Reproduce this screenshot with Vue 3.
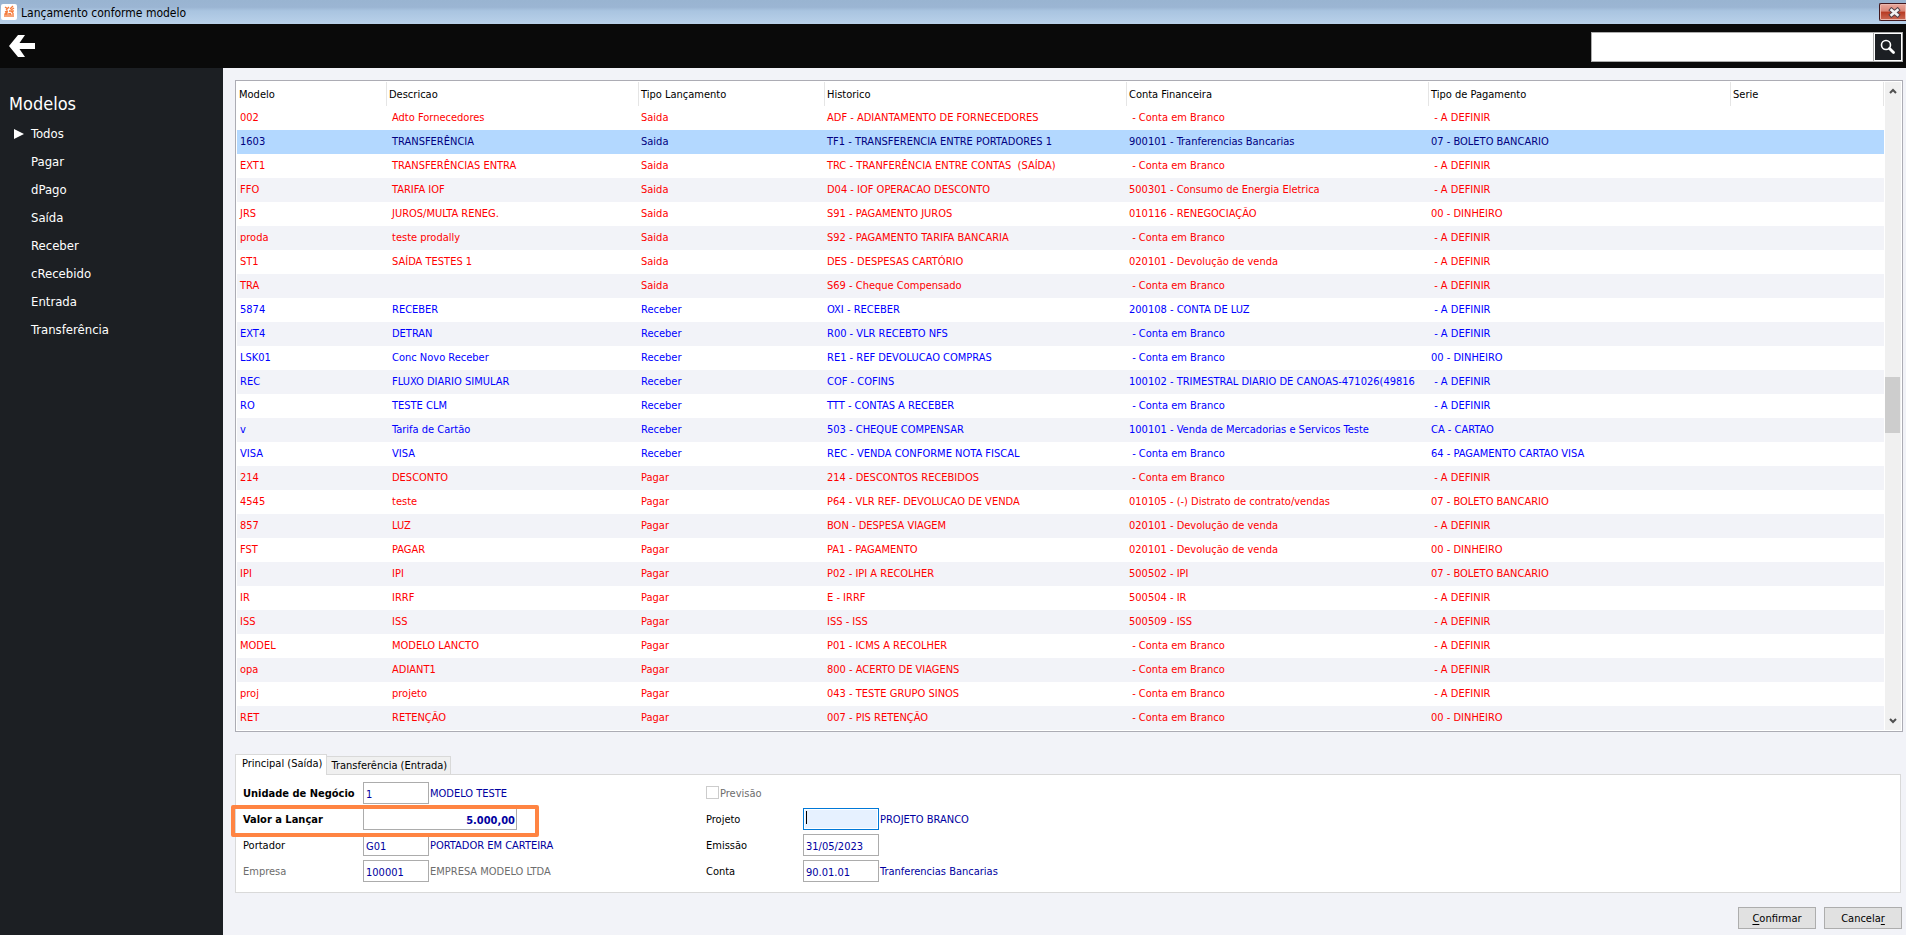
<script setup>
import { ref } from 'vue'

const menu = ['Todos', 'Pagar', 'dPago', 'Saída', 'Receber', 'cRecebido', 'Entrada', 'Transferência']
const active = ref('Todos')
const selected = ref('1603')
const search = ref('')

const columns = [
  { label: 'Modelo', cls: 'c-modelo' },
  { label: 'Descricao', cls: 'c-desc' },
  { label: 'Tipo Lançamento', cls: 'c-tipo' },
  { label: 'Historico', cls: 'c-wide' },
  { label: 'Conta Financeira', cls: 'c-wide' },
  { label: 'Tipo de Pagamento', cls: 'c-wide' },
  { label: 'Serie', cls: 'c-serie' }
]

const branco = ' - Conta em Branco'
const definir = ' - A DEFINIR'
const dinheiro = '00 - DINHEIRO'
const boleto = '07 - BOLETO BANCARIO'

const rows = [
  ['002', 'Adto Fornecedores', 'Saida', 'ADF - ADIANTAMENTO DE FORNECEDORES', branco, definir],
  ['1603', 'TRANSFERÊNCIA', 'Saida', 'TF1 - TRANSFERENCIA ENTRE PORTADORES 1', '900101 - Tranferencias Bancarias', boleto],
  ['EXT1', 'TRANSFERÊNCIAS ENTRA', 'Saida', 'TRC - TRANFERÊNCIA ENTRE CONTAS  (SAÍDA)', branco, definir],
  ['FFO', 'TARIFA IOF', 'Saida', 'D04 - IOF OPERACAO DESCONTO', '500301 - Consumo de Energia Eletrica', definir],
  ['JRS', 'JUROS/MULTA RENEG.', 'Saida', 'S91 - PAGAMENTO JUROS', '010116 - RENEGOCIAÇÃO', dinheiro],
  ['proda', 'teste prodally', 'Saida', 'S92 - PAGAMENTO TARIFA BANCARIA', branco, definir],
  ['ST1', 'SAÍDA TESTES 1', 'Saida', 'DES - DESPESAS CARTÓRIO', '020101 - Devolução de venda', definir],
  ['TRA', '', 'Saida', 'S69 - Cheque Compensado', branco, definir],
  ['5874', 'RECEBER', 'Receber', 'OXI - RECEBER', '200108 - CONTA DE LUZ', definir],
  ['EXT4', 'DETRAN', 'Receber', 'R00 - VLR RECEBTO NFS', branco, definir],
  ['LSK01', 'Conc Novo Receber', 'Receber', 'RE1 - REF DEVOLUCAO COMPRAS', branco, dinheiro],
  ['REC', 'FLUXO DIARIO SIMULAR', 'Receber', 'COF - COFINS', '100102 - TRIMESTRAL DIARIO DE CANOAS-471026(49816', definir],
  ['RO', 'TESTE CLM', 'Receber', 'TTT - CONTAS A RECEBER', branco, definir],
  ['v', 'Tarifa de Cartão', 'Receber', '503 - CHEQUE COMPENSAR', '100101 - Venda de Mercadorias e Servicos Teste', 'CA - CARTAO'],
  ['VISA', 'VISA', 'Receber', 'REC - VENDA CONFORME NOTA FISCAL', branco, '64 - PAGAMENTO CARTAO VISA'],
  ['214', 'DESCONTO', 'Pagar', '214 - DESCONTOS RECEBIDOS', branco, definir],
  ['4545', 'teste', 'Pagar', 'P64 - VLR REF- DEVOLUCAO DE VENDA', '010105 - (-) Distrato de contrato/vendas', boleto],
  ['857', 'LUZ', 'Pagar', 'BON - DESPESA VIAGEM', '020101 - Devolução de venda', definir],
  ['FST', 'PAGAR', 'Pagar', 'PA1 - PAGAMENTO', '020101 - Devolução de venda', dinheiro],
  ['IPI', 'IPI', 'Pagar', 'P02 - IPI A RECOLHER', '500502 - IPI', boleto],
  ['IR', 'IRRF', 'Pagar', 'E - IRRF', '500504 - IR', definir],
  ['ISS', 'ISS', 'Pagar', 'ISS - ISS', '500509 - ISS', definir],
  ['MODEL', 'MODELO LANCTO', 'Pagar', 'P01 - ICMS A RECOLHER', branco, definir],
  ['opa', 'ADIANT1', 'Pagar', '800 - ACERTO DE VIAGENS', branco, definir],
  ['proj', 'projeto', 'Pagar', '043 - TESTE GRUPO SINOS', branco, definir],
  ['RET', 'RETENÇÃO', 'Pagar', '007 - PIS RETENÇÃO', branco, dinheiro]
]

const unidade = ref('1')
const valor = ref('5.000,00')
const portador = ref('G01')
const empresa = ref('100001')
const projeto = ref('')
const emissao = ref('31/05/2023')
const conta = ref('90.01.01')
</script>

<template>
  <div class="window">
    <header class="titlebar">
      <svg class="app-icon" width="16" height="16" viewBox="0 0 16 16" aria-hidden="true">
        <rect width="16" height="16" rx="2" fill="#fff" />
        <g stroke="#f47b3c" stroke-width="1.4" fill="none">
          <path d="M4 3l3 2M8 3L5 6M9 5l3-3M10 6l3-2M4 8l3-1M8 7h2l2 2M4 13v-3l2-1v4M8 13V9M10 13v-2l-1-2M12 13V9M12 6v2" />
        </g>
      </svg>
      <h1>Lançamento conforme modelo</h1>
      <button class="close" type="button" aria-label="Fechar">
        <svg width="13" height="11" viewBox="0 0 13 11" aria-hidden="true">
          <path d="M3.500 3L9.500 8M9.500 3L3.500 8" stroke="#54434a" stroke-width="4.500" stroke-linecap="square" />
          <path d="M3.500 3L9.500 8M9.500 3L3.500 8" stroke="#f4f4f4" stroke-width="2.500" stroke-linecap="square" />
        </svg>
      </button>
    </header>

    <div class="toolbar">
      <button class="back" type="button" aria-label="Voltar">
        <svg width="26" height="22" viewBox="0 0 26 22" aria-hidden="true">
          <path d="M0 11L9 0h7L10.500 8H26v6H10.500L16 22H9z" fill="#fff" />
        </svg>
      </button>
      <form class="search" @submit.prevent>
        <input v-model="search" type="text" aria-label="Pesquisar" />
        <button type="submit" aria-label="Buscar">
          <svg width="16" height="16" viewBox="0 0 16 16" aria-hidden="true">
            <circle cx="6" cy="6" r="4.500" fill="none" stroke="#fff" stroke-width="1.600" />
            <path d="M9.500 9.500L13.500 13.500" stroke="#fff" stroke-width="2.800" stroke-linecap="round" />
          </svg>
        </button>
      </form>
    </div>

    <div class="body">
      <nav class="sidebar">
        <h2>Modelos</h2>
        <ul>
          <li v-for="item in menu" :key="item">
            <span class="marker">
              <svg v-if="item === active" width="10" height="10" viewBox="0 0 10 10" aria-hidden="true">
                <path d="M0 0L10 5 0 10z" fill="#fff" />
              </svg>
            </span>
            <a href="#" @click.prevent="active = item">{{ item }}</a>
          </li>
        </ul>
      </nav>

      <main>
        <section class="grid">
          <table>
            <thead>
              <tr>
                <th v-for="c in columns" :key="c.label" :class="c.cls">{{ c.label }}</th>
              </tr>
            </thead>
            <tbody>
              <tr
                v-for="r in rows"
                :key="r[0]"
                :class="{ receber: r[2] === 'Receber', selected: r[0] === selected }"
                @click="selected = r[0]"
              >
                <td v-for="(cell, i) in r" :key="i">{{ cell }}</td>
                <td></td>
              </tr>
            </tbody>
          </table>
          <div class="scrollbar">
            <svg width="8" height="6" viewBox="0 0 8 6" aria-hidden="true">
              <path d="M1 5l3-3 3 3" fill="none" stroke="#505050" stroke-width="2" />
            </svg>
            <div class="track"><div class="thumb"></div></div>
            <svg width="8" height="6" viewBox="0 0 8 6" aria-hidden="true">
              <path d="M1 1l3 3 3-3" fill="none" stroke="#505050" stroke-width="2" />
            </svg>
          </div>
        </section>

        <div class="tabs" role="tablist">
          <button class="tab current" type="button" role="tab" aria-selected="true">Principal (Saída)</button>
          <button class="tab" type="button" role="tab" aria-selected="false">Transferência (Entrada)</button>
        </div>

        <form class="panel" @submit.prevent>
          <div class="group left">
            <div class="row">
              <label class="strong" for="unidade">Unidade de Negócio</label>
              <input id="unidade" v-model="unidade" class="code" type="text" />
              <output for="unidade">MODELO TESTE</output>
            </div>
            <div class="row marked">
              <label class="strong" for="valor">Valor a Lançar</label>
              <input id="valor" v-model="valor" class="amount" type="text" />
            </div>
            <div class="row">
              <label for="portador">Portador</label>
              <input id="portador" v-model="portador" class="code" type="text" />
              <output for="portador">PORTADOR EM CARTEIRA</output>
            </div>
            <div class="row muted">
              <label for="empresa">Empresa</label>
              <input id="empresa" v-model="empresa" class="code" type="text" />
              <output for="empresa">EMPRESA MODELO LTDA</output>
            </div>
          </div>
          <div class="group right">
            <div class="row muted">
              <input id="previsao" class="check" type="checkbox" disabled />
              <label for="previsao">Previsão</label>
            </div>
            <div class="row">
              <label for="projeto">Projeto</label>
              <input id="projeto" v-model="projeto" class="short editing" type="text" />
              <output for="projeto">PROJETO BRANCO</output>
            </div>
            <div class="row">
              <label for="emissao">Emissão</label>
              <input id="emissao" v-model="emissao" class="short" type="text" />
            </div>
            <div class="row">
              <label for="conta">Conta</label>
              <input id="conta" v-model="conta" class="short" type="text" />
              <output for="conta">Tranferencias Bancarias</output>
            </div>
          </div>
        </form>

        <footer class="actions">
          <button type="button"><u>C</u>onfirmar</button>
          <button type="button">Cancela<u>r</u></button>
        </footer>
      </main>
    </div>
  </div>
</template>

<style>
body {
  background: #f2f3f8;
}
</style>

<style scoped>
*,
*::before,
*::after {
  box-sizing: border-box;
}

.window {
  display: flex;
  flex-direction: column;
  min-height: 100vh;
  overflow: hidden;
  font-family: "DejaVu Sans Condensed", "DejaVu Sans", sans-serif;
  font-size: 11px;
  color: #000;
}

button,
input {
  font: inherit;
  margin: 0;
}

.titlebar {
  display: flex;
  align-items: center;
  gap: 4px;
  height: 24px;
  padding-left: 1px;
  background: linear-gradient(#99b4d1, #9bb5d3 30%, #a9c4e0 45%, #b9d1ea);
}

.titlebar h1 {
  flex: 1;
  margin: 0;
  padding-top: 2px;
  font-size: 12px;
  font-weight: 400;
  line-height: 22px;
}

.close {
  display: flex;
  align-items: center;
  justify-content: center;
  width: 27px;
  height: 18px;
  padding: 0 0 0 3px;
  border: 1px solid #43191f;
  border-right: 0;
  border-radius: 2px 0 0 2px;
  background: linear-gradient(#e9a99e, #d98677 45%, #b73a22 50%, #cc6a55);
  box-shadow: inset 0 0 0 1px #eab6ac;
}

.toolbar {
  display: flex;
  align-items: center;
  justify-content: space-between;
  height: 44px;
  padding: 0 3px 0 9px;
  background: #0a0a0a;
}

.back {
  display: flex;
  padding: 0;
  border: 0;
  background: none;
}

.search {
  display: flex;
  width: 312px;
  height: 30px;
  margin-bottom: -2px;
  border: 1px solid #acacac;
  background: #fff;
}

.search input {
  flex: 1;
  min-width: 0;
  padding: 0 6px;
  border: 0;
  outline: none;
}

.search button {
  display: flex;
  align-items: center;
  justify-content: center;
  width: 28px;
  padding: 0;
  border: 1px solid #fff;
  background: #1c1f23;
  box-shadow: -1px 0 0 #acacac;
}

.body {
  display: flex;
  flex: 1;
}

.sidebar {
  flex: none;
  width: 223px;
  padding: 22px 9px;
  background: #1c1f23;
  color: #fff;
}

.sidebar h2 {
  margin: 0 0 2px;
  padding-top: 1px;
  font-size: 18px;
  font-weight: 400;
  line-height: 26px;
}

.sidebar ul {
  margin: 0;
  padding: 0;
  list-style: none;
}

.sidebar li {
  display: flex;
  align-items: center;
  height: 28px;
}

.marker {
  display: flex;
  width: 22px;
  padding: 2px 0 0 5px;
}

.sidebar a {
  color: #fff;
  font-size: 13px;
  text-decoration: none;
}

main {
  flex: 1;
  min-width: 0;
  padding: 12px 3px 6px 12px;
  background: #f2f3f8;
}

.grid {
  display: flex;
  gap: 1px;
  padding: 1px;
  border: 1px solid #acacb4;
  background: #fff;
}

table {
  flex: 1;
  min-width: 0;
  border-collapse: collapse;
  table-layout: fixed;
}

th,
td {
  height: 24px;
  overflow: hidden;
  font-weight: 400;
  text-align: left;
  white-space: pre;
}

th {
  padding: 2px 2px 0;
  line-height: 22px;
  box-shadow: inset -1px 0 0 #e5e5e5;
}

td {
  padding: 0 1px 0 2px;
  line-height: 24px;
}

td:first-child {
  padding-left: 3px;
}

td:nth-child(2) {
  padding-left: 5px;
}

.c-modelo {
  width: 150px;
}

.c-desc {
  width: 252px;
}

.c-tipo {
  width: 186px;
}

.c-wide {
  width: 302px;
}

tbody tr {
  color: #f00;
}

tbody tr:nth-child(even) {
  background: #f2f3f8;
}

tbody tr.receber {
  color: #00f;
}

tbody tr.selected {
  background: #b3d8ff;
  color: #000080;
}

.scrollbar {
  display: flex;
  flex-direction: column;
  align-items: center;
  width: 16px;
  padding: 6px 0;
  background: #f0f0f0;
}

.track {
  flex: 1;
  width: 100%;
  display: flex;
  flex-direction: column;
  padding-right: 1px;
}

.track::before {
  content: "";
  flex: 283;
}

.track::after {
  content: "";
  flex: 285;
}

.thumb {
  height: 56px;
  background: #cdcdcd;
}

.tabs {
  display: flex;
  align-items: flex-end;
  margin-top: 22px;
}

.tab {
  height: 18px;
  padding: 1px 3px 0 4px;
  border: 1px solid #d9d9d9;
  border-left: 0;
  border-bottom: 0;
  background: #f0f0f0;
  color: #000;
  line-height: 16px;
}

.tab.current {
  position: relative;
  height: 21px;
  margin-bottom: -1px;
  padding: 0 4px 3px 6px;
  border-left: 1px solid #d9d9d9;
  background: #fff;
}

.panel {
  display: flex;
  margin-right: 2px;
  padding: 7px 7px 10px;
  border: 1px solid #d9d9d9;
  background: #fff;
}

.group {
  display: flex;
  flex-direction: column;
  gap: 4px;
}

.left {
  width: 463px;
}

.row {
  display: flex;
  align-items: center;
  height: 22px;
}

.left label {
  width: 120px;
}

.right label {
  width: 97px;
}

.strong {
  font-weight: 700;
}

.row input[type="text"] {
  height: 22px;
  padding: 2px 3px 0;
  border: 1px solid #acacac;
  border-radius: 0;
  outline: none;
  background: #fff;
  color: #0000a0;
}

.row input.code {
  width: 66px;
  padding-left: 2px;
}

.row input.amount {
  width: 154px;
  padding-right: 1px;
  font-weight: 700;
  text-align: right;
}

.row input.short {
  width: 76px;
  padding-left: 2px;
}

.row input.editing {
  border-color: #0078d7;
  background: linear-gradient(#000, #000) 2px 2px / 1px 13px no-repeat, #e6f1ff;
  box-shadow: inset 0 0 0 1px #fff;
}

output {
  margin-left: 1px;
  color: #0000a0;
}

.muted label,
.muted output {
  color: #6d6d6d;
}

.check {
  appearance: none;
  width: 13px;
  height: 13px;
  margin: 0 1px 2px 0;
  border: 1px solid #ccc;
  background: #fff;
}

.marked {
  position: relative;
}

.marked::after {
  content: "";
  position: absolute;
  top: -3px;
  left: -12px;
  width: 308px;
  height: 32px;
  border: 4px solid #ff8442;
  border-radius: 2px;
  pointer-events: none;
}

.actions {
  display: flex;
  justify-content: flex-end;
  gap: 8px;
  margin-top: 14px;
  padding-right: 1px;
}

.actions button {
  width: 78px;
  height: 22px;
  padding: 0;
  border: 1px solid #adadad;
  background: #e1e1e1;
  color: #000;
}

.actions u {
  text-underline-offset: 2px;
}
</style>
